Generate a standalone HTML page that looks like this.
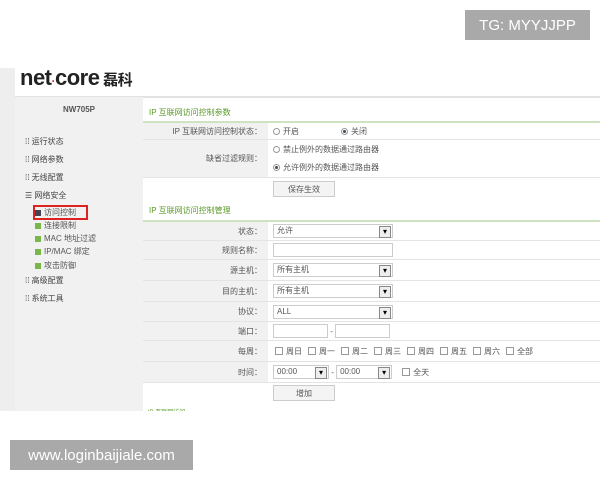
<!DOCTYPE html>
<html><head><meta charset="utf-8"><style>
*{margin:0;padding:0;box-sizing:border-box}
body{width:600px;height:480px;background:#fff;position:relative;overflow:hidden;font-family:"Liberation Sans","Noto Sans CJK SC",sans-serif;font-size:8px;color:#555}
.abs{position:absolute}
.wm{background:#a9a9a9;color:#fff;font-size:15px;display:flex;align-items:center;justify-content:center}
.side{left:15px;top:97px;width:128px;height:314px;background:#f1f1f1}
.mi{position:absolute;left:10px;font-size:8px;color:#444}
.sub{position:absolute;left:20px;font-size:8px;color:#555}
.g{display:inline-block;width:6px;height:6px;background:#7ab648;margin-right:3px;vertical-align:-1px}
.row{position:absolute;left:143px;width:457px;border-bottom:1px solid #e4e4e4;background:#fff}
.lab{position:absolute;left:0;top:0;bottom:0;width:125px;background:#f1f1f1;text-align:right;padding-right:6px;display:flex;align-items:center;justify-content:flex-end}
.val{position:absolute;left:130px;top:0;bottom:0;display:flex;align-items:center}
.sel{width:120px;height:14px;border:1px solid #ccc;background:#fff;position:relative;padding-left:3px;line-height:12px}
.sel:after{content:"▾";position:absolute;right:1px;top:1px;width:10px;height:10px;border:1px solid #888;background:#eee;font-size:8px;line-height:9px;text-align:center;color:#000}
.inp{height:14px;border:1px solid #ccc;background:#fff}
.cb{display:inline-block;width:8px;height:8px;border:1px solid #999;margin:0 3px 0 6px;vertical-align:-1px}
.title{position:absolute;left:143px;width:457px;color:#5a9a2a;font-size:8px;padding-left:6px;border-bottom:2px solid #cfe3c0}
.btn{border:1px solid #ccc;background:#f4f4f4;width:62px;height:16px;display:flex;align-items:center;justify-content:center}
.rad{display:inline-block;width:7px;height:7px;border:1px solid #999;border-radius:50%;margin-right:3px;vertical-align:-1px}
.rad.on{background:radial-gradient(#456 40%,#fff 50%)}
</style></head><body>
<div class="abs wm" style="left:465px;top:10px;width:125px;height:30px">TG: MYYJJPP</div>
<div class="abs" style="left:0;top:68px;width:15px;height:343px;background:#eee"></div>
<div class="abs" style="left:20px;top:65px;font-size:22px;font-weight:bold;color:#222;letter-spacing:-0.5px">net<span style="color:#c33;font-size:12px">·</span>core<span style="font-size:15px"> 磊科</span></div>
<div class="abs" style="left:15px;top:96px;width:585px;height:2px;background:#e2e2e2"></div>
<div class="abs side">
<div style="position:absolute;left:0;width:128px;top:8px;text-align:center;font-weight:bold;color:#555">NW705P</div>
<div class="mi" style="top:39px">⁞⁞ 运行状态</div>
<div class="mi" style="top:57px">⁞⁞ 网络参数</div>
<div class="mi" style="top:75px">⁞⁞ 无线配置</div>
<div class="mi" style="top:93px">☰ 网络安全</div>
<div class="abs" style="left:18px;top:108px;width:55px;height:15px;border:2px solid #d22"></div>
<div class="sub" style="top:110px"><span class="g" style="background:#445"></span>访问控制</div>
<div class="sub" style="top:123px"><span class="g"></span>连接限制</div>
<div class="sub" style="top:136px"><span class="g"></span>MAC 地址过滤</div>
<div class="sub" style="top:149px"><span class="g"></span>IP/MAC 绑定</div>
<div class="sub" style="top:163px"><span class="g"></span>攻击防御</div>
<div class="mi" style="top:178px">⁞⁞ 高级配置</div>
<div class="mi" style="top:196px">⁞⁞ 系统工具</div>
</div>
<div class="title" style="top:106px;height:17px;line-height:13px">IP 互联网访问控制参数</div>
<div class="row" style="top:123px;height:17px"><div class="lab">IP 互联网访问控制状态：</div><div class="val"><span class="rad"></span>开启<span style="width:42px"></span><span class="rad on"></span>关闭</div></div>
<div class="row" style="top:140px;height:38px"><div class="lab">缺省过滤规则：</div><div class="val" style="flex-direction:column;align-items:flex-start;justify-content:center;gap:7px"><div><span class="rad"></span>禁止例外的数据通过路由器</div><div><span class="rad on"></span>允许例外的数据通过路由器</div></div></div>
<div class="row" style="top:178px;height:22px;border:0"><div class="val"><div class="btn">保存生效</div></div></div>
<div class="title" style="top:204px;height:18px;line-height:14px">IP 互联网访问控制管理</div>
<div class="row" style="top:222px;height:19px"><div class="lab">状态：</div><div class="val"><div class="sel">允许</div></div></div>
<div class="row" style="top:241px;height:19px"><div class="lab">规则名称：</div><div class="val"><div class="inp" style="width:120px"></div></div></div>
<div class="row" style="top:260px;height:21px"><div class="lab">源主机：</div><div class="val"><div class="sel">所有主机</div></div></div>
<div class="row" style="top:281px;height:21px"><div class="lab">目的主机：</div><div class="val"><div class="sel">所有主机</div></div></div>
<div class="row" style="top:302px;height:20px"><div class="lab">协议：</div><div class="val"><div class="sel">ALL</div></div></div>
<div class="row" style="top:322px;height:19px"><div class="lab">端口：</div><div class="val"><div class="inp" style="width:55px"></div>&nbsp;-&nbsp;<div class="inp" style="width:55px"></div></div></div>
<div class="row" style="top:341px;height:21px"><div class="lab">每周：</div><div class="val"><span class="cb" style="margin-left:2px"></span>周日<span class="cb"></span>周一<span class="cb"></span>周二<span class="cb"></span>周三<span class="cb"></span>周四<span class="cb"></span>周五<span class="cb"></span>周六<span class="cb"></span>全部</div></div>
<div class="row" style="top:362px;height:21px"><div class="lab">时间：</div><div class="val"><div class="sel" style="width:56px">00:00</div>&nbsp;-&nbsp;<div class="sel" style="width:56px">00:00</div><span class="cb" style="margin-left:10px"></span>全天</div></div>
<div class="row" style="top:383px;height:20px;border:0"><div class="val"><div class="btn">增加</div></div></div>
<div class="abs" style="left:148px;top:407px;color:#5a9a2a;font-size:6px;overflow:hidden;height:4px">IP 互联网访问</div>
<div class="abs wm" style="left:10px;top:440px;width:183px;height:30px">www.loginbaijiale.com</div>
</body></html>
